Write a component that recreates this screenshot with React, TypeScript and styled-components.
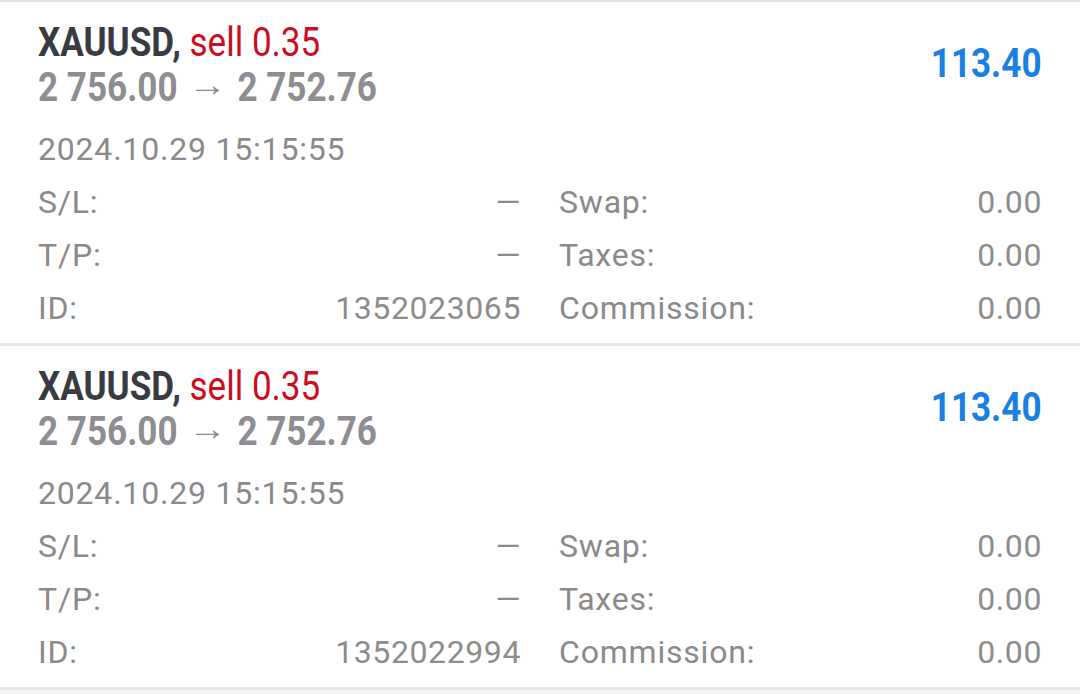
import React from 'react';
import styled, { createGlobalStyle } from 'styled-components';

interface Deal {
    symbol: string;
    side: string;
    volume: string;
    openPrice: string;
    closePrice: string;
    profit: string;
    time: string;
    sl: string;
    tp: string;
    id: string;
    swap: string;
    taxes: string;
    commission: string;
}

const deals: Deal[] = [
    {
        symbol: 'XAUUSD',
        side: 'sell',
        volume: '0.35',
        openPrice: '2 756.00',
        closePrice: '2 752.76',
        profit: '113.40',
        time: '2024.10.29 15:15:55',
        sl: '—',
        tp: '—',
        id: '1352023065',
        swap: '0.00',
        taxes: '0.00',
        commission: '0.00',
    },
    {
        symbol: 'XAUUSD',
        side: 'sell',
        volume: '0.35',
        openPrice: '2 756.00',
        closePrice: '2 752.76',
        profit: '113.40',
        time: '2024.10.29 15:15:55',
        sl: '—',
        tp: '—',
        id: '1352022994',
        swap: '0.00',
        taxes: '0.00',
        commission: '0.00',
    },
];

const GlobalStyle = createGlobalStyle`
    body {
        margin: 0;
        background: #f2f2f2;
        font-family: Roboto, 'Noto Sans', sans-serif;
    }
`;

const List = styled.div`
    display: flex;
    flex-direction: column;
    border-top: 2px solid #e4e4e4;
`;

const Card = styled.section`
    background: #ffffff;
    padding: 18px 38px 8px 38px;
    border-bottom: 3px solid #e6e6e6;
`;

const Head = styled.div`
    display: flex;
    justify-content: space-between;
    align-items: center;
`;

// Roboto Condensed is not around, so squeeze plain Roboto
const Condensed = styled.div<{ $right?: boolean }>`
    font-size: 41px;
    line-height: 45px;
    white-space: nowrap;
    transform: scaleX(0.855);
    transform-origin: ${p => (p.$right ? 'right' : 'left')} center;
`;

const Symbol = styled.span`
    font-weight: 700;
    color: #3a3a41;
`;

const Side = styled.span`
    font-weight: 400;
    color: #cc0c1f;
`;

const Prices = styled.span`
    font-weight: 700;
    color: #8d8d92;
`;

const Arrow = styled.span`
    display: inline-block;
    font-size: 34px;
    font-weight: 400;
    line-height: 30px;
    vertical-align: 5px;
    transform: scaleX(1.35);
    margin: 0 18px;
`;

const Profit = styled(Condensed)`
    font-weight: 700;
    color: #1a7fe2;
    margin-top: -4px;
`;

const Time = styled.div`
    font-size: 32px;
    line-height: 53px;
    color: #8a8a8a;
    letter-spacing: 0.8px;
    margin-top: 13px;
`;

const Details = styled.div`
    display: grid;
    grid-template-columns: 1fr 1fr;
    column-gap: 38px;
`;

const Field = styled.div`
    display: flex;
    justify-content: space-between;
    font-size: 32px;
    line-height: 53px;
    color: #8a8a8a;
    letter-spacing: 0.8px;
`;

const Value = styled.span`
    color: #8c8c8c;
    letter-spacing: 0.6px;
`;

function DealCard({ deal }: { deal: Deal }) {
    return (
        <Card>
            <Head>
                <div>
                    <Condensed>
                        <Symbol>{deal.symbol},</Symbol> <Side>{deal.side} {deal.volume}</Side>
                    </Condensed>
                    <Condensed>
                        <Prices>
                            {deal.openPrice}
                            <Arrow>→</Arrow>
                            {deal.closePrice}
                        </Prices>
                    </Condensed>
                </div>
                <Profit $right>{deal.profit}</Profit>
            </Head>
            <Time>{deal.time}</Time>
            <Details>
                <Field><span>S/L:</span><Value>{deal.sl}</Value></Field>
                <Field><span>Swap:</span><Value>{deal.swap}</Value></Field>
                <Field><span>T/P:</span><Value>{deal.tp}</Value></Field>
                <Field><span>Taxes:</span><Value>{deal.taxes}</Value></Field>
                <Field><span>ID:</span><Value>{deal.id}</Value></Field>
                <Field><span>Commission:</span><Value>{deal.commission}</Value></Field>
            </Details>
        </Card>
    );
}

export default function App() {
    return (
        <React.Fragment>
            <GlobalStyle />
            <List>
                {deals.map(d => (
                    <DealCard key={d.id} deal={d} />
                ))}
            </List>
        </React.Fragment>
    );
}
